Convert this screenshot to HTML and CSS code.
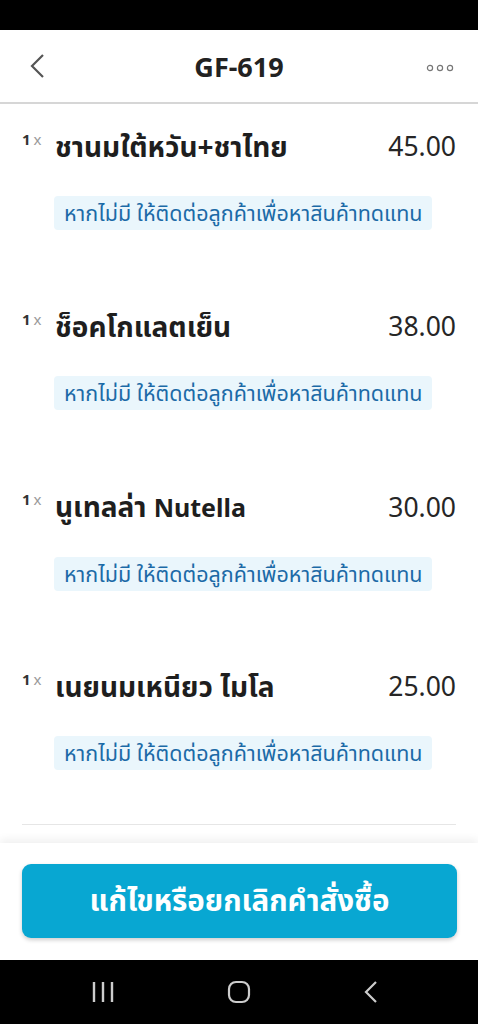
FILE: index.html
```html
<!DOCTYPE html>
<html lang="th">
<head>
    <meta charset="UTF-8">
    <meta name="viewport" content="width=device-width, initial-scale=1.0">
    <title>GF-619</title>
    <link rel="stylesheet" href="styles.css">
</head>
<body>
    <div class="status-bar"></div>

    <header class="top-bar">
        <svg class="back" width="28" height="26" viewBox="0 0 28 26">
            <path d="M19 2 L8 13 L19 24" fill="none" stroke="#555" stroke-width="2.2"/>
        </svg>
        <h1 class="title">GF-619</h1>
        <svg class="more" width="28" height="8" viewBox="0 0 28 8">
            <circle cx="4" cy="4" r="2.6" fill="none" stroke="#777" stroke-width="1.2"/>
            <circle cx="14" cy="4" r="2.6" fill="none" stroke="#777" stroke-width="1.2"/>
            <circle cx="24" cy="4" r="2.6" fill="none" stroke="#777" stroke-width="1.2"/>
        </svg>
    </header>

    <main class="items">
        <div class="item">
            <div class="item-row">
                <span class="qty">1<small>x</small></span>
                <span class="name">ชานมใต้หวัน+ชาไทย</span>
                <span class="price">45.00</span>
            </div>
            <div class="note">หากไม่มี ให้ติดต่อลูกค้าเพื่อหาสินค้าทดแทน</div>
        </div>
        <div class="item">
            <div class="item-row">
                <span class="qty">1<small>x</small></span>
                <span class="name">ช็อคโกแลตเย็น</span>
                <span class="price">38.00</span>
            </div>
            <div class="note">หากไม่มี ให้ติดต่อลูกค้าเพื่อหาสินค้าทดแทน</div>
        </div>
        <div class="item">
            <div class="item-row">
                <span class="qty">1<small>x</small></span>
                <span class="name">นูเทลล่า <span class="latin">Nutella</span></span>
                <span class="price">30.00</span>
            </div>
            <div class="note">หากไม่มี ให้ติดต่อลูกค้าเพื่อหาสินค้าทดแทน</div>
        </div>
        <div class="item">
            <div class="item-row">
                <span class="qty">1<small>x</small></span>
                <span class="name">เนยนมเหนียว ไมโล</span>
                <span class="price">25.00</span>
            </div>
            <div class="note">หากไม่มี ให้ติดต่อลูกค้าเพื่อหาสินค้าทดแทน</div>
        </div>
        <div class="divider"></div>
    </main>

    <div class="bottom">
        <button class="action">แก้ไขหรือยกเลิกคำสั่งซื้อ</button>
    </div>

    <nav class="nav-bar">
        <svg width="24" height="22" viewBox="0 0 24 22">
            <path d="M3 1 V21 M12 1 V21 M21 1 V21" stroke="#ccc" stroke-width="2.4"/>
        </svg>
        <svg width="24" height="24" viewBox="0 0 24 24">
            <rect x="2" y="2" width="20" height="20" rx="7" fill="none" stroke="#ccc" stroke-width="2.2"/>
        </svg>
        <svg width="16" height="24" viewBox="0 0 16 24">
            <path d="M13 2 L3 12 L13 22" fill="none" stroke="#ccc" stroke-width="2.2"/>
        </svg>
    </nav>
</body>
</html>
```

FILE: styles.css
```css
body {
    margin: 0;
    background-color: #fff;
    font-family: "Noto Sans", "Noto Sans Thai", "Noto Sans CJK SC", sans-serif;
    color: #222;
    display: flex;
    flex-direction: column;
    height: 1024px;
}

.status-bar {
    height: 30px;
    background-color: #000;
}

.top-bar {
    height: 72px;
    display: flex;
    align-items: center;
    justify-content: space-between;
    padding: 0 24px;
    border-bottom: 2px solid #d6d6d6;
}

.title {
    margin: 0;
    font-size: 27px;
    font-weight: bold;
    color: #222;
}

.more {
    margin-top: 4px;
}

.items {
    flex: 1;
    overflow: hidden;
    padding: 0 22px;
}

.item {
    height: 180px;
    padding-top: 24px;
    box-sizing: border-box;
}

.item-row {
    display: flex;
    align-items: center;
}

.qty {
    width: 33px;
    font-size: 15px;
    line-height: 16px;
    font-weight: bold;
    color: #333;
    align-self: flex-start;
    margin-top: 3px;
}

.qty small {
    font-size: 15px;
    font-weight: normal;
    color: #999;
    margin-left: 3px;
}

.name {
    flex: 1;
    font-size: 28px;
    line-height: 36px;
    font-weight: bold;
    color: #1e1e1e;
}

.latin {
    font-size: 25px;
}

.price {
    font-size: 26.5px;
    line-height: 36px;
    color: #262626;
}

.note {
    display: inline-block;
    margin: 32px 0 0 32px;
    padding: 4px 10px;
    line-height: 26px;
    background-color: #eaf6fc;
    border-radius: 4px;
    color: #1c6aa7;
    font-size: 21.5px;
}

.divider {
    height: 1px;
    background-color: #e6e6e6;
}

.bottom {
    height: 117px;
    box-sizing: border-box;
    padding: 21px 21px 0 22px;
    box-shadow: 0 -4px 8px rgba(0, 0, 0, 0.06);
}

.action {
    width: 100%;
    height: 74px;
    border: none;
    border-radius: 9px;
    background-color: #08a7d2;
    color: #fff;
    font-family: inherit;
    font-size: 29.5px;
    font-weight: bold;
    box-shadow: 0 2px 4px rgba(0, 0, 0, 0.2);
}

.nav-bar {
    height: 64px;
    background-color: #000;
    display: flex;
    align-items: center;
    gap: 112px;
    padding-left: 91px;
}
```
